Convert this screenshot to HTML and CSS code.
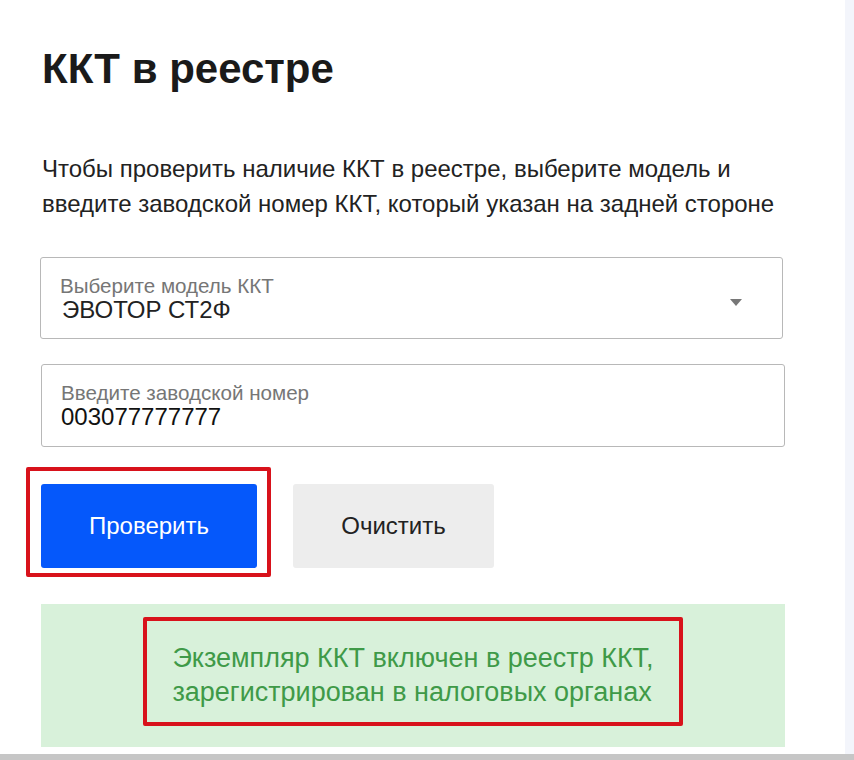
FILE: index.html
```html
<!DOCTYPE html>
<html lang="ru">
<head>
  <meta charset="UTF-8">
  <meta name="viewport" content="width=device-width, initial-scale=1.0">
  <title>ККТ в реестре</title>
  <link rel="stylesheet" href="styles.css">
</head>
<body>
  <div class="window">
    <div class="page">
      <main class="main">
        <h1 class="title">ККТ в реестре</h1>
        <p class="lead">Чтобы проверить наличие ККТ в реестре, выберите модель и введите заводской номер ККТ, который указан на задней стороне</p>

        <div class="field field_select">
          <div class="field-text">
            <span class="field-label">Выберите модель ККТ</span>
            <span class="field-value field-value_select">ЭВОТОР СТ2Ф</span>
          </div>
          <span class="field-arrow"></span>
        </div>

        <div class="field field_input">
          <div class="field-text">
            <span class="field-label">Введите заводской номер</span>
            <span class="field-value">003077777777</span>
          </div>
        </div>

        <div class="actions">
          <div class="highlight highlight_btn">
            <button class="btn btn_primary">Проверить</button>
          </div>
          <button class="btn btn_secondary">Очистить</button>
        </div>

        <div class="result">
          <div class="highlight highlight_msg">
            <p class="result-text">Экземпляр ККТ включен в реестр ККТ,<br>зарегистрирован в налоговых органах</p>
          </div>
        </div>
      </main>
      <div class="side"></div>
    </div>
    <div class="scrollbar"></div>
  </div>
</body>
</html>
```

FILE: styles.css
```css
body {
  margin: 0;
  padding: 0;
  font-family: "Liberation Sans", Arial, sans-serif;
  background: #fff;
}

.window {
  width: 854px;
  height: 760px;
  display: flex;
  flex-direction: column;
  overflow: hidden;
}

.page {
  flex: 1;
  display: flex;
  min-height: 0;
}

.main {
  width: 845px;
  box-sizing: border-box;
  padding: 0 0 0 41px;
  background: #fff;
}

.side {
  flex: 1;
  background: #f3f5fb;
}

.scrollbar {
  height: 6px;
  background: #c6c6c6;
}

.title {
  margin: 45px 0 0 1px;
  font-size: 42px;
  line-height: 48px;
  font-weight: bold;
  color: #1a1a1a;
}

.lead {
  margin: 58px 0 0 1px;
  width: 760px;
  font-size: 24px;
  line-height: 35px;
  color: #222;
}

.field {
  box-sizing: border-box;
  border: 1px solid #b8b8b8;
  border-radius: 3px;
  display: flex;
  align-items: flex-start;
  padding: 17px 0 0 19px;
}

.field_select {
  width: 743px;
  height: 82px;
  margin-top: 36px;
  margin-left: -1px;
}

.field_input {
  width: 744px;
  height: 83px;
  margin-top: 25px;
  padding-top: 17px;
}

.field-text {
  flex: 1;
  display: flex;
  flex-direction: column;
}

.field-label {
  font-size: 20.6px;
  line-height: 22px;
  color: #767676;
}

.field-value {
  font-size: 24px;
  line-height: 26px;
  color: #111;
}

.field-value_select {
  margin-left: 2px;
  color: #222;
}

.field-arrow {
  align-self: center;
  width: 0;
  height: 0;
  border-left: 6px solid transparent;
  border-right: 6px solid transparent;
  border-top: 7px solid #777;
  margin: -8px 40px 0 0;
}

.actions {
  display: flex;
  align-items: flex-start;
  margin-top: 20px;
  margin-left: -15px;
}

.highlight {
  border: 4px solid #d8121b;
  border-radius: 2px;
}

.highlight_btn {
  padding: 13px 10px 5px 11px;
}

.btn {
  border: none;
  border-radius: 3px;
  height: 84px;
  font-family: inherit;
  font-size: 24px;
}

.btn_primary {
  display: block;
  width: 216px;
  background: #0558fb;
  color: #fff;
}

.btn_secondary {
  width: 201px;
  margin: 17px 0 0 22px;
  background: #ededed;
  color: #222;
}

.result {
  width: 744px;
  height: 143px;
  margin-top: 27px;
  box-sizing: border-box;
  padding-top: 13px;
  background: #d8f1da;
  display: flex;
  justify-content: center;
  align-items: flex-start;
}

.highlight_msg {
  width: 540px;
  height: 109px;
  box-sizing: border-box;
  padding-top: 7px;
  display: flex;
  align-items: center;
  justify-content: center;
}

.result-text {
  margin: 0;
  font-size: 27px;
  line-height: 34px;
  color: #3f9a48;
}
```
